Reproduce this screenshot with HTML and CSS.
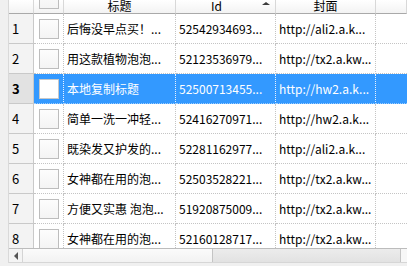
FILE: index.html
```html
<!DOCTYPE html>
<html lang="zh">
<head>
    <meta charset="UTF-8">
    <title>列表</title>
    <link rel="stylesheet" href="styles.css">
</head>
<body>
    <div class="vista">
        <div class="fila cabecera">
            <div class="num"></div>
            <div class="chk"><span class="caja"></span></div>
            <div class="celda">标题</div>
            <div class="celda">Id<span class="flecha"></span></div>
            <div class="celda">封面</div>
            <div class="celda resto"></div>
        </div>

        <div class="cuerpo">
            <div class="fila">
                <div class="num">1</div>
                <div class="chk"><span class="caja"></span></div>
                <div class="celda">后悔没早点买！...</div>
                <div class="celda">52542934693...</div>
                <div class="celda">http://ali2.a.k...</div>
                <div class="celda resto"></div>
            </div>
            <div class="fila">
                <div class="num">2</div>
                <div class="chk"><span class="caja"></span></div>
                <div class="celda">用这款植物泡泡...</div>
                <div class="celda">52123536979...</div>
                <div class="celda">http://tx2.a.kw...</div>
                <div class="celda resto"></div>
            </div>
            <div class="fila sel">
                <div class="num">3</div>
                <div class="chk"><span class="caja"></span></div>
                <div class="celda">本地复制标题</div>
                <div class="celda">52500713455...</div>
                <div class="celda">http://hw2.a.k...</div>
                <div class="celda resto"></div>
            </div>
            <div class="fila">
                <div class="num">4</div>
                <div class="chk"><span class="caja"></span></div>
                <div class="celda">简单一洗一冲轻...</div>
                <div class="celda">52416270971...</div>
                <div class="celda">http://hw2.a.k...</div>
                <div class="celda resto"></div>
            </div>
            <div class="fila">
                <div class="num">5</div>
                <div class="chk"><span class="caja"></span></div>
                <div class="celda">既染发又护发的...</div>
                <div class="celda">52281162977...</div>
                <div class="celda">http://ali2.a.k...</div>
                <div class="celda resto"></div>
            </div>
            <div class="fila">
                <div class="num">6</div>
                <div class="chk"><span class="caja"></span></div>
                <div class="celda">女神都在用的泡...</div>
                <div class="celda">52503528221...</div>
                <div class="celda">http://tx2.a.kw...</div>
                <div class="celda resto"></div>
            </div>
            <div class="fila">
                <div class="num">7</div>
                <div class="chk"><span class="caja"></span></div>
                <div class="celda">方便又实惠 泡泡...</div>
                <div class="celda">51920875009...</div>
                <div class="celda">http://tx2.a.kw...</div>
                <div class="celda resto"></div>
            </div>
            <div class="fila">
                <div class="num">8</div>
                <div class="chk"><span class="caja"></span></div>
                <div class="celda">女神都在用的泡...</div>
                <div class="celda">52160128717...</div>
                <div class="celda">http://tx2.a.kw...</div>
                <div class="celda resto"></div>
            </div>
        </div>

        <div class="barra">
            <div class="boton"><span class="izq"></span></div>
            <div class="pulgar"></div>
            <div class="pista"></div>
            <div class="esquina"></div>
        </div>
    </div>
</body>
</html>
```

FILE: styles.css
```css
* {
    box-sizing: border-box;
}

body {
    margin: 0;
    background-color: #f0f0f0;
    font-family: "Noto Sans CJK SC", "Noto Sans", sans-serif;
    font-size: 12px;
    color: #000;
    overflow: hidden;
}

.vista {
    margin-left: 8px;
    height: 263px;
    border-left: 1px solid #d9d9d9;
    background-color: #fff;
    display: flex;
    flex-direction: column;
}

.fila {
    display: grid;
    grid-template-columns: 25px 30px 112px 100px 100px 1fr;
    height: 30px;
}

.cuerpo {
    height: 234px;
    overflow: hidden;
}

.num {
    background-color: #f3f3f3;
    border-right: 1px solid #c9c9c9;
    border-bottom: 1px solid #c9c9c9;
    padding-left: 3px;
    display: flex;
    align-items: center;
    font-size: 13px;
}

.chk,
.celda {
    border-right: 1px dotted #c4c4c4;
    border-bottom: 1px dotted #c4c4c4;
    display: flex;
    align-items: center;
    white-space: nowrap;
    overflow: hidden;
}

.chk {
    padding-left: 5px;
}

.celda {
    padding-left: 3px;
}

.celda.resto {
    border-right: none;
}

.caja {
    width: 20px;
    height: 20px;
    border: 1px solid #bdbdbd;
    background: linear-gradient(#fdfdfd, #f4f4f4);
}

/* cabecera recortada arriba */
.cabecera {
    height: 14px;
    background: linear-gradient(#ffffff, #f2f2f2);
}

.cabecera .num,
.cabecera .chk,
.cabecera .celda {
    border-bottom: 1px solid #a9a9a9;
    border-right: 1px solid #d8d8d8;
    background: none;
    align-items: flex-end;
    overflow: hidden;
}

.cabecera .celda {
    justify-content: center;
    line-height: 15px;
    padding-left: 0;
}

.cabecera .chk {
    align-items: flex-end;
    padding-bottom: 4px;
}

.cabecera .caja {
    flex-shrink: 0;
}

.flecha {
    margin-left: 40px;
    margin-bottom: 8px;
    width: 0;
    height: 0;
    border-left: 4px solid transparent;
    border-right: 4px solid transparent;
    border-bottom: 3px solid #3c3c3c;
}

.cabecera .celda:nth-child(4) {
    padding-left: 30px;
}

/* fila seleccionada */
.sel .num {
    background-color: #e2e2e2;
    font-weight: bold;
}

.sel .chk,
.sel .celda {
    background-color: #3399ff;
    color: #fff;
    border-right-color: #e6f2ff;
    border-bottom-color: #9ccdff;
}

.sel .caja {
    background: #fff;
    border-color: #c8c8c8;
}

/* barra horizontal */
.barra {
    display: flex;
    height: 15px;
    border-top: 1px solid #bcbcbc;
    border-bottom: 1px solid #d6d6d6;
}

.boton {
    width: 14px;
    background-color: #f4f4f4;
    border-right: 1px solid #d4d4d4;
    display: flex;
    align-items: center;
    justify-content: center;
}

.izq {
    width: 0;
    height: 0;
    border-top: 4px solid transparent;
    border-bottom: 4px solid transparent;
    border-right: 4px solid #555;
}

.pulgar {
    width: 190px;
    background: linear-gradient(#fbfbfb, #f2f2f2);
    border-right: 1px solid #c4c4c4;
}

.pista {
    flex: 1;
    background: linear-gradient(#ececec, #e2e2e2);
    border-right: 1px solid #c4c4c4;
}

.esquina {
    width: 6px;
    background-color: #f7f7f7;
}
```
